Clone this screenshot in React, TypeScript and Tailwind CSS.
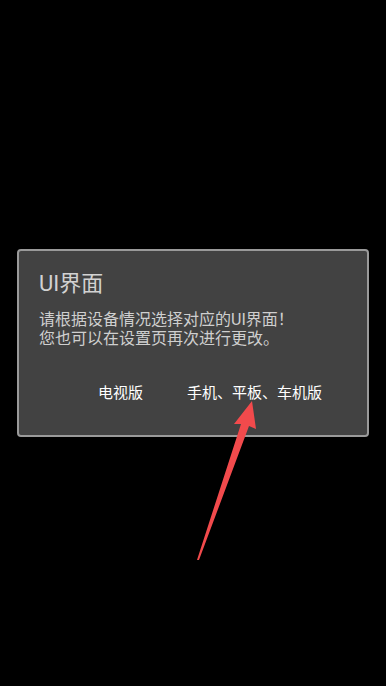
import React from 'react';

const App: React.FC = () => {
  return (
    <div
      className="relative h-[686px] w-full bg-black flex items-center justify-center overflow-hidden"
      style={{ fontFamily: 'Roboto, "Noto Sans CJK SC", sans-serif' }}
    >
      <div className="w-[352px] rounded-[4px] border-2 border-[#9a9a9a] bg-[#424242] pt-4 pb-[32px]">
        <h1 className="pl-5 text-[22px] leading-[33px] text-[#d2d2d2]">UI界面</h1>
        <p className="mt-[10px] pl-5 text-[16px] leading-[19px] text-[#cfcfcf]">
          请根据设备情况选择对应的UI界面！
          <br />
          您也可以在设置页再次进行更改。
        </p>
        <div className="mt-[35px] flex justify-end pr-[23px] text-[15px] leading-[20px] text-white">
          <button className="px-[22px]">电视版</button>
          <button className="px-[22px]">手机、平板、车机版</button>
        </div>
      </div>

      {/* red annotation arrow */}
      <svg className="pointer-events-none absolute left-0 top-0" width="386" height="686" viewBox="0 0 386 686">
        <polygon
          points="252,401 256,429 249,426 199,560 197,560 241,424 234,424"
          fill="#f24a4c"
        />
      </svg>
    </div>
  );
};

export default App;
